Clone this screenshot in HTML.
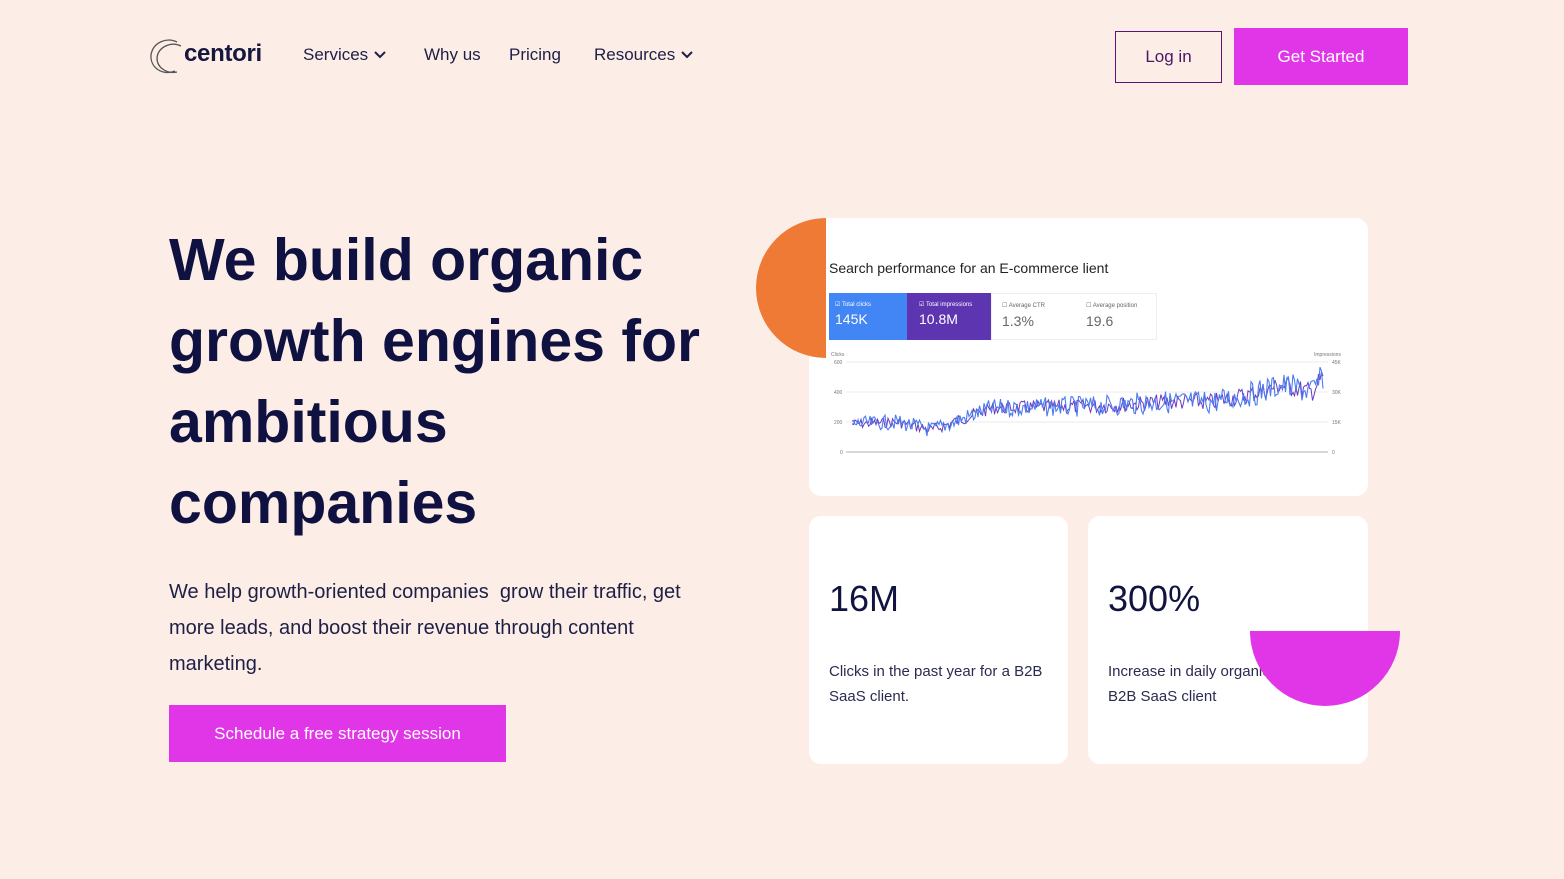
<!DOCTYPE html>
<html><head><meta charset="utf-8"><style>
*{margin:0;padding:0;box-sizing:border-box}
body{width:1564px;height:879px;background:#fdede7;font-family:"Liberation Sans",sans-serif;color:#11143f;position:relative;overflow:hidden}
.a{position:absolute}
.nav{font-size:17px;color:#1d1f45;top:45px}
h1{position:absolute;left:169px;top:220px;font-size:59px;line-height:81px;font-weight:bold;letter-spacing:0px;color:#0f1140;white-space:nowrap}
.p{left:169px;top:574px;font-size:20px;line-height:36px;color:#1d1f45;width:560px}
.btn{background:#e036e8;color:#fff;text-align:center}
.card{background:#fff;border-radius:12px}
</style></head><body>
<svg class="a" style="left:147px;top:38px" width="36" height="38" viewBox="0 0 36 38"><path d="M30 4 C20 -1 6 4 4 17 C3 30 16 38 28 33" fill="none" stroke="#555" stroke-width="1.3"/><path d="M34 8 C24 3 11 9 10 20 C10 30 20 36 30 34" fill="none" stroke="#555" stroke-width="1.3"/></svg>
<div class="a" style="left:184px;top:40px;font-size:24px;font-weight:bold;color:#15173f;letter-spacing:-0.3px">centori</div>
<div class="a nav" style="left:303px">Services <svg width="14" height="10" viewBox="0 0 14 10"><path d="M2 2 L7 7 L12 2" fill="none" stroke="#1d1f45" stroke-width="2"/></svg></div>
<div class="a nav" style="left:424px">Why us</div>
<div class="a nav" style="left:509px">Pricing</div>
<div class="a nav" style="left:594px">Resources <svg width="14" height="10" viewBox="0 0 14 10"><path d="M2 2 L7 7 L12 2" fill="none" stroke="#1d1f45" stroke-width="2"/></svg></div>
<div class="a" style="left:1115px;top:31px;width:107px;height:52px;border:1.5px solid #5a1378;color:#4a1668;font-size:17px;text-align:center;line-height:50px">Log in</div>
<div class="a btn" style="left:1234px;top:28px;width:174px;height:57px;font-size:17px;line-height:57px">Get Started</div>

<h1>We build organic<br>growth engines for<br>ambitious<br>companies</h1>
<div class="a p">We help growth-oriented companies&nbsp; grow their traffic, get more leads, and boost their revenue through content marketing.</div>
<div class="a btn" style="left:169px;top:705px;width:337px;height:57px;font-size:17px;line-height:57px">Schedule a free strategy session</div>

<div class="a card" style="left:809px;top:218px;width:559px;height:278px"></div>
<div class="a" style="left:756px;top:218px;width:140px;height:140px;border-radius:50%;background:#ef7a35"></div>
<div class="a" style="left:826px;top:218px;width:520px;height:275px;background:#fff"></div>
<div class="a" style="left:829px;top:260px;font-size:14px;color:#222">Search performance for an E-commerce lient</div>
<div class="a" style="left:829px;top:293px;width:78px;height:47px;background:#4285f4;color:#fff"><div style="font-size:6px;padding:8px 0 0 6px">☑ Total clicks</div><div style="font-size:14px;padding:3px 0 0 6px">145K</div></div>
<div class="a" style="left:907px;top:293px;width:84px;height:47px;background:#5e35b1;color:#fff"><div style="font-size:6px;padding:8px 0 0 12px">☑ Total impressions</div><div style="font-size:14px;padding:3px 0 0 12px">10.8M</div></div>
<div class="a" style="left:991px;top:293px;width:166px;height:47px;border:1px solid #eee;color:#666"><div style="position:absolute;left:10px;top:8px;font-size:6px">☐ Average CTR</div><div style="position:absolute;left:10px;top:19px;font-size:14px">1.3%</div><div style="position:absolute;left:94px;top:8px;font-size:6px">☐ Average position</div><div style="position:absolute;left:94px;top:19px;font-size:14px">19.6</div></div>
<svg class="a" style="left:826px;top:350px" width="525" height="110">
<g font-size="5" fill="#777" font-family="Liberation Sans"><text x="5" y="6">Clicks</text><text x="488" y="6">Impressions</text>
<text x="8" y="14">600</text><text x="8" y="44">400</text><text x="8" y="74">200</text><text x="14" y="104">0</text>
<text x="506" y="14">45K</text><text x="506" y="44">30K</text><text x="506" y="74">15K</text><text x="506" y="104">0</text></g>
<g stroke="#e4e4e4" stroke-width="0.7"><line x1="20" y1="12" x2="502" y2="12"/><line x1="20" y1="42" x2="502" y2="42"/><line x1="20" y1="72" x2="502" y2="72"/></g>
<line x1="20" y1="102" x2="502" y2="102" stroke="#999" stroke-width="0.8"/>
<polyline id="l2" fill="none" stroke="#6a3bbf" stroke-width="1"/>
<polyline id="l1" fill="none" stroke="#4a7cf0" stroke-width="1.1"/>
</svg>
<script>
var s=7;function r(){s=(s*9301+49297)%233280;return s/233280-0.5}
function base(x){var pts=[[0,74],[45,72],[80,80],[140,58],[250,56],[310,52],[360,52],[400,44],[430,35],[460,42],[472,25],[497,22]];for(var i=1;i<pts.length;i++){if(x<=pts[i][0]){var a=pts[i-1],b=pts[i];return a[1]+(b[1]-a[1])*(x-a[0])/(b[0]-a[0])}}return 22}
function mk(id,amp){var p=[];for(var x=0;x<=472;x+=1.5){var y=base(x)+r()*amp*(1+x/500);p.push((x+26)+","+y.toFixed(1))}document.getElementById(id).setAttribute("points",p.join(" "))}
mk("l2",10);mk("l1",14);
</script>

<div class="a card" style="left:809px;top:516px;width:259px;height:248px"></div>
<div class="a" style="left:829px;top:578px;font-size:36px;color:#11143f">16M</div>
<div class="a" style="left:829px;top:659px;font-size:15px;line-height:25px;color:#2a2c4f;width:220px">Clicks in the past year for a B2B SaaS client.</div>
<div class="a card" style="left:1088px;top:516px;width:280px;height:248px"></div>
<div class="a" style="left:1108px;top:578px;font-size:36px;color:#11143f">300%</div>
<div class="a" style="left:1108px;top:659px;font-size:15px;line-height:25px;color:#2a2c4f;width:240px">Increase in daily organic traffic for a B2B SaaS client</div>
<div class="a" style="left:1250px;top:631px;width:150px;height:75px;background:#e036e8;border-radius:0 0 75px 75px"></div>
</body></html>
